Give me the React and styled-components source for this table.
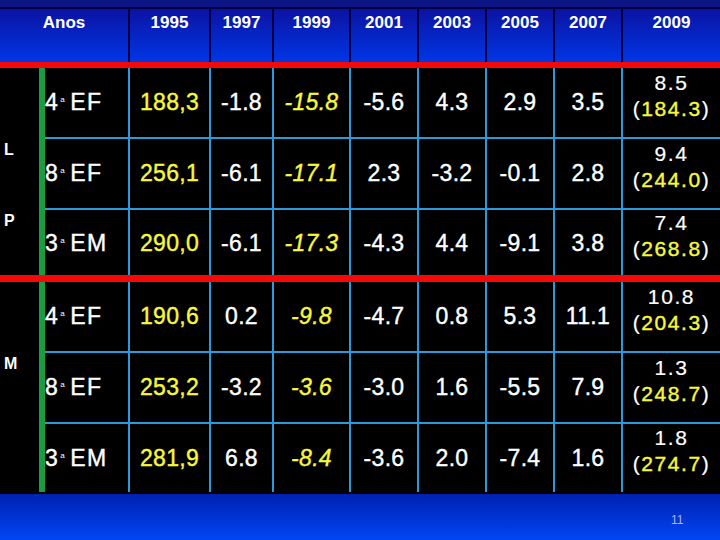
import styled, { createGlobalStyle } from "styled-components";

const GlobalStyle = createGlobalStyle`
  html, body {
    margin: 0;
    padding: 0;
    background: #000;
  }
  body {
    font-family: "Liberation Sans", Arial, sans-serif;
  }
`;

const HEAD_COLS = "128px 81px 63px 77px 68px 68px 68px 68px 99px";
const BODY_COLS = "39px 6px 83px 81px 63px 77px 68px 68px 68px 68px 99px";
const LINE = "#2a9ad8";
const YELLOW = "#f8f83a";

const years = ["1995", "1997", "1999", "2001", "2003", "2005", "2007", "2009"];

const groups = [
  {
    heights: [69, 71, 67],
    rows: [
      { label: "", grade: "4", level: "EF", values: ["188,3", "-1.8", "-15.8", "-5.6", "4.3", "2.9", "3.5"], last: ["8.5", "184.3"] },
      { label: "L", grade: "8", level: "EF", values: ["256,1", "-6.1", "-17.1", "2.3", "-3.2", "-0.1", "2.8"], last: ["9.4", "244.0"] },
      { label: "P", grade: "3", level: "EM", values: ["290,0", "-6.1", "-17.3", "-4.3", "4.4", "-9.1", "3.8"], last: ["7.4", "268.8"] },
    ],
  },
  {
    heights: [69, 71, 70],
    rows: [
      { label: "", grade: "4", level: "EF", values: ["190,6", "0.2", "-9.8", "-4.7", "0.8", "5.3", "11.1"], last: ["10.8", "204.3"] },
      { label: "M", grade: "8", level: "EF", values: ["253,2", "-3.2", "-3.6", "-3.0", "1.6", "-5.5", "7.9"], last: ["1.3", "248.7"] },
      { label: "", grade: "3", level: "EM", values: ["281,9", "6.8", "-8.4", "-3.6", "2.0", "-7.4", "1.6"], last: ["1.8", "274.7"] },
    ],
  },
];

const Slide = styled.div`
  width: 720px;
  height: 540px;
  display: flex;
  flex-direction: column;
  background: #000;
  overflow: hidden;
`;

const TopBand = styled.div`
  height: 7px;
  background: #0b1684;
`;

const HeaderRow = styled.div`
  display: grid;
  grid-template-columns: ${HEAD_COLS};
  height: 55px;
`;

const HeaderCell = styled.div`
  box-sizing: border-box;
  background: linear-gradient(#0b13a2, #0036e6);
  border-top: 2px solid #000040;
  border-left: ${(p) => (p.$first ? "none" : "2px solid #000040")};
  padding-top: 4px;
  text-align: center;
  color: #fff;
  font-weight: bold;
  font-size: 17px;
  line-height: 19px;
`;

const RedBar = styled.div`
  height: ${(p) => p.$h}px;
  background: #f40808;
`;

const Row = styled.div`
  display: grid;
  grid-template-columns: ${BODY_COLS};
  height: ${(p) => p.$h}px;
`;

const GroupLabel = styled.div`
  padding: 4px 0 0 4px;
  color: #fff;
  font-weight: bold;
  font-size: 16px;
  line-height: 18px;
`;

const GreenBar = styled.div`
  background: #1a9c40;
`;

const Cell = styled.div`
  box-sizing: border-box;
  display: flex;
  align-items: center;
  justify-content: ${(p) => (p.$name ? "flex-start" : "center")};
  border-top: ${(p) => (p.$top ? `2px solid ${LINE}` : "none")};
  border-left: ${(p) => (p.$name ? "none" : `2px solid ${LINE}`)};
  color: ${(p) => (p.$yellow ? YELLOW : "#fff")};
  font-style: ${(p) => (p.$italic ? "italic" : "normal")};
  font-size: 23px;
  -webkit-text-stroke: 0.4px currentColor;
  letter-spacing: ${(p) => (p.$name ? "1.5px" : "0.3px")};
  white-space: pre;
`;

const Ord = styled.sup`
  font-size: 8px;
  position: relative;
  top: -3px;
  margin: 0 4px 0 1px;
  vertical-align: top;
  -webkit-text-stroke: 0;
`;

const LastCell = styled.div`
  box-sizing: border-box;
  display: flex;
  flex-direction: column;
  align-items: center;
  justify-content: center;
  padding-bottom: 14px;
  border-top: ${(p) => (p.$top ? `2px solid ${LINE}` : "none")};
  border-left: 2px solid ${LINE};
  color: #fff;
  font-size: 21px;
  line-height: 26px;
  letter-spacing: 1.6px;
  -webkit-text-stroke: 0.2px currentColor;
`;

const Yellow = styled.span`
  color: ${YELLOW};
  -webkit-text-stroke: 0.4px currentColor;
`;

const Gap = styled.div`
  height: 2px;
`;

const Footer = styled.div`
  flex: 1;
  position: relative;
  background: linear-gradient(#0020b2, #0046f4);
`;

const PageNo = styled.span`
  position: absolute;
  left: 671px;
  top: 19px;
  color: #a6b8f4;
  font-size: 12px;
`;

const Group = ({ data }) => (
  <>
    {data.rows.map((r, i) => (
      <Row key={i} $h={data.heights[i]}>
        <GroupLabel>{r.label}</GroupLabel>
        <GreenBar />
        <Cell $name $top={i > 0}>
          {r.grade}
          <Ord>a</Ord>
          {r.level}
        </Cell>
        {r.values.map((v, j) => (
          <Cell key={j} $top={i > 0} $yellow={j === 0 || j === 2} $italic={j === 2}>
            {v}
          </Cell>
        ))}
        <LastCell $top={i > 0}>
          <span>{r.last[0]}</span>
          <span>
            (<Yellow>{r.last[1]}</Yellow>)
          </span>
        </LastCell>
      </Row>
    ))}
  </>
);

export default function App() {
  return (
    <>
      <GlobalStyle />
      <Slide>
        <TopBand />
        <HeaderRow>
          <HeaderCell $first>Anos</HeaderCell>
          {years.map((y) => (
            <HeaderCell key={y}>{y}</HeaderCell>
          ))}
        </HeaderRow>
        <RedBar $h={6} />
        <Group data={groups[0]} />
        <RedBar $h={7} />
        <Group data={groups[1]} />
        <Gap />
        <Footer>
          <PageNo>11</PageNo>
        </Footer>
      </Slide>
    </>
  );
}
